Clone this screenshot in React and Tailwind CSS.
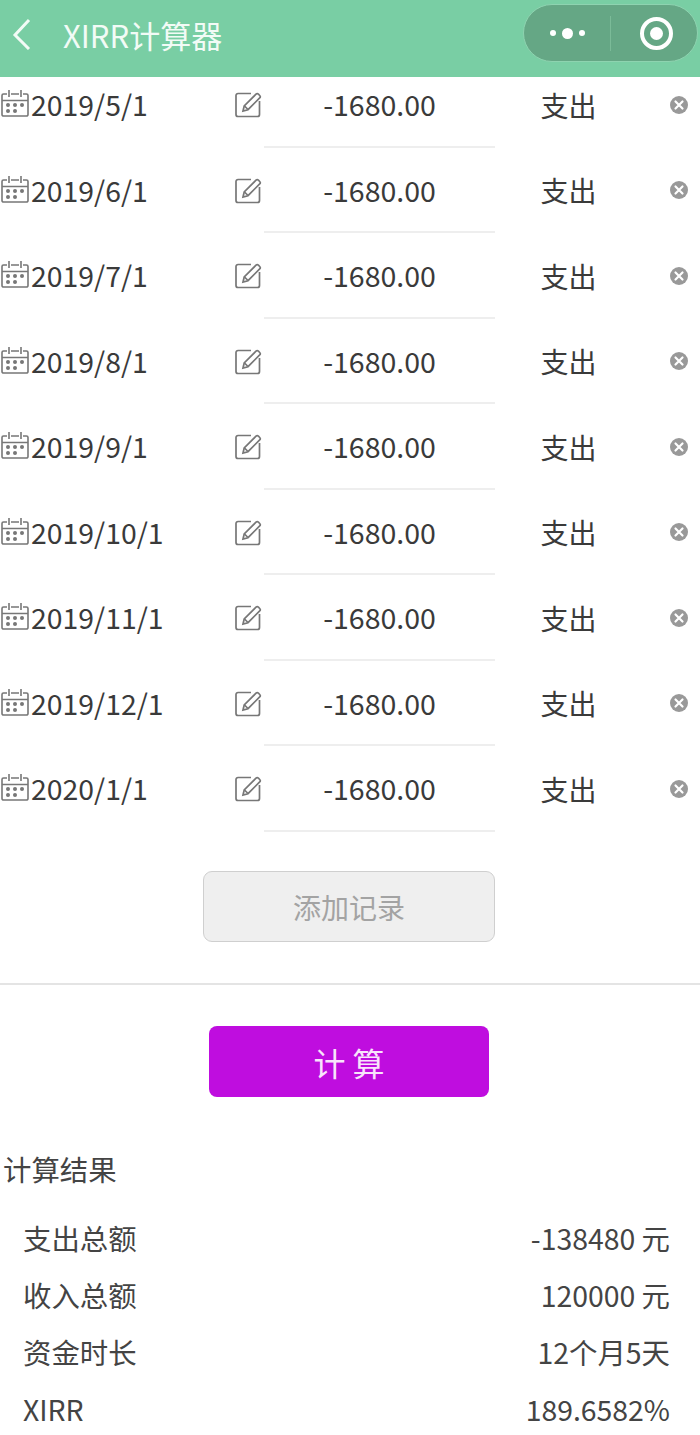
const dates = ["2019/5/1","2019/6/1","2019/7/1","2019/8/1","2019/9/1","2019/10/1","2019/11/1","2019/12/1","2020/1/1"];
const results = [["支出总额","-138480 元"],["收入总额","120000 元"],["资金时长","12个月5天"],["XIRR","189.6582%"]];

function CalendarIcon() {
  return (
    <svg width="28" height="30" viewBox="0 0 28 30" fill="none" stroke="#777" strokeWidth="1.6" className="mb-[3px] shrink-0">
      <path d="M6 6H2.500A1.500 1.500 0 0 0 1 7.500v19A1.500 1.500 0 0 0 2.500 28h23a1.500 1.500 0 0 0 1.500-1.500v-19A1.500 1.500 0 0 0 25.500 6H22" />
      <path d="M10 6h8M1 12.500h26M8 2v7M20 2v7" />
      <g fill="#777" stroke="none">
        <circle cx="7" cy="17" r="2" /><circle cx="14" cy="17" r="2" /><circle cx="21" cy="17" r="2" />
        <circle cx="7" cy="23" r="2" /><circle cx="14" cy="23" r="2" />
      </g>
    </svg>
  );
}
function EditIcon() {
  return (
    <svg width="27" height="27" viewBox="0 0 27 27" fill="none" stroke="#777" strokeWidth="1.700">
      <path d="M16 2.500H3A2 2 0 0 0 1 4.500v19a2 2 0 0 0 2 2h19.500a2 2 0 0 0 2-2V10" />
      <path d="M8 20l1.200-5L21 3.200a1.700 1.700 0 0 1 2.400 0l1.300 1.300a1.700 1.700 0 0 1 0 2.400L13 18.700z" />
      <path d="M9.500 15l3.500 3.500" />
    </svg>
  );
}
function CloseIcon() {
  return (
    <svg width="18" height="18" viewBox="0 0 18 18">
      <circle cx="9" cy="9" r="9" fill="#999" />
      <path d="M5.500 5.500l7 7M12.500 5.500l-7 7" stroke="#fff" strokeWidth="2.200" strokeLinecap="round" />
    </svg>
  );
}
function Row({ date }) {
  return (
    <div className="flex h-[85.5px] shrink-0">
      <div className="flex w-[235px] shrink-0 items-center pl-px gap-[2px]">
        <CalendarIcon />
        <span className="pb-[1px] text-[28.4px] text-[#3a3a3a] leading-none">{date}</span>
      </div>
      <div className="flex w-[29px] shrink-0 items-center"><EditIcon /></div>
      <div className="flex w-[231px] shrink-0 items-center justify-center border-b-2 border-[#eeeeee] pt-[2px] text-[28.5px] text-[#3a3a3a]">-1680.00</div>
      <div className="flex w-[175px] shrink-0 items-center justify-center pr-[28px] text-[28px] text-[#3a3a3a]">支出</div>
      <div className="flex items-center"><CloseIcon /></div>
    </div>
  );
}

export default function App() {
  return (
    <div className="w-[700px] h-[1435px] overflow-hidden bg-white" style={{ fontFamily: '"Noto Sans CJK SC", "Noto Sans", sans-serif' }}>
      <header className="relative z-10 flex h-[77px] items-center bg-[#79cea4]">
        <svg width="20" height="32" viewBox="0 0 20 32" fill="none" stroke="#f2fbf6" strokeWidth="3" className="ml-[12px] mb-[9px]">
          <path d="M17 2L3 17l14 14" />
        </svg>
        <span className="ml-[31px] mb-[9px] text-[31px] text-[#f2fbf6] leading-none">XIRR计算器</span>
        <div className="absolute left-[523px] top-[4px] flex h-[58px] w-[175px] items-center rounded-full border border-[#8ed3b0] bg-[#65a785]">
          <div className="flex h-[35px] w-[87px] items-center justify-center gap-[6px] border-r border-[#7bbb98]">
            <span className="size-[6px] rounded-full bg-white" />
            <span className="size-[11px] rounded-full bg-white" />
            <span className="size-[6px] rounded-full bg-white" />
          </div>
          <div className="flex flex-1 items-center justify-center pl-[4px]">
            <span className="flex size-[33px] items-center justify-center rounded-full border-[4px] border-white">
              <span className="size-[13px] rounded-full bg-white" />
            </span>
          </div>
        </div>
      </header>
      <div className="h-[757px] overflow-hidden">
        <div className="-mt-[15px] flex flex-col">
          {dates.map((d) => <Row key={d} date={d} />)}
        </div>
      </div>
      <div className="flex h-[151px] items-start justify-center border-b-2 border-[#e4e4e4] pt-[37px]">
        <button className="ml-[-2px] flex h-[71px] w-[292px] items-center justify-center rounded-[9px] border-[1.5px] border-[#cfcfcf] bg-[#efefef] text-[28px] text-[#a3a3a3]">添加记录</button>
      </div>
      <div className="flex justify-center pt-[41px]">
        <button className="ml-[-2px] flex h-[71px] w-[280px] items-center justify-center rounded-[8px] bg-[#bf0ddf] text-[32px] text-[#f8e4fb]">计 算</button>
      </div>
      <div className="mt-[52px] pl-[3px] text-[28.4px] leading-[40px] text-[#444]">计算结果</div>
      <div className="mt-[21px] flex flex-col pl-[23px] pr-[30px] text-[28.4px] text-[#444]">
        {results.map(([k, v]) => (
          <div key={k} className="flex h-[57px] items-center justify-between"><span>{k}</span><span>{v}</span></div>
        ))}
      </div>
    </div>
  );
}
